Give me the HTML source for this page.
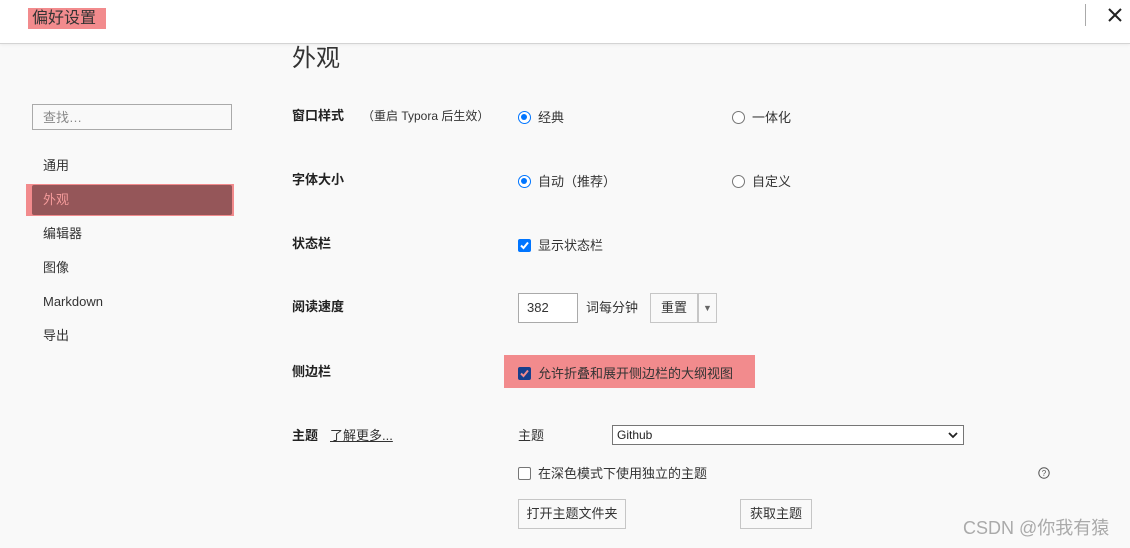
<!DOCTYPE html>
<html><head><meta charset="utf-8"><style>
*{margin:0;padding:0;box-sizing:border-box}
body{width:1130px;height:548px;overflow:hidden;background:#f9f9f9;font-family:"Liberation Sans","Noto Sans CJK SC",sans-serif;color:#333;font-size:13px;line-height:15px;position:relative}
.a{position:absolute;white-space:nowrap}
.hdr{position:absolute;left:0;top:0;width:1130px;height:44px;background:#fff;border-bottom:1px solid #d4d4d4;box-shadow:0 1px 3px rgba(0,0,0,.06)}
.b{font-weight:bold;color:#222}
.radio{position:absolute;width:13px;height:13px;border-radius:50%;border:1px solid #767676;background:#fff}
.radio.on{border:1.5px solid #0075ff}
.radio.on::after{content:"";position:absolute;left:2px;top:2px;width:6px;height:6px;border-radius:50%;background:#0075ff}
.cb{position:absolute;width:13px;height:13px;border-radius:2px;background:#0075ff}
.cb svg{position:absolute;left:0;top:0}
.btn{position:absolute;border:1px solid #c6c6c6;background:#f9f9f9;text-align:center}
</style></head><body>
<div class="hdr"></div>
<div class="a" style="left:28px;top:8px;width:78px;height:21px;background:#f28b8d"></div>
<div class="a" style="left:32px;top:10px;font-size:16px;line-height:18px;color:#333">偏好设置</div>
<div class="a" style="left:1085px;top:4px;width:1px;height:22px;background:#aaa"></div>
<svg class="a" style="left:1108px;top:8px" width="14" height="14"><path d="M1 1L13 13M13 1L1 13" stroke="#222" stroke-width="2"/></svg>

<div class="a" style="left:32px;top:104px;width:200px;height:26px;border:1px solid #aaa;background:#f9f9f9"></div>
<div class="a" style="left:43px;top:110px;color:#888">查找…</div>
<div class="a" style="left:43px;top:158px">通用</div>
<div class="a" style="left:26px;top:184px;width:208px;height:32px;background:#f28b8d"></div>
<div class="a" style="left:32px;top:185px;width:200px;height:30px;background:#955659;border-radius:2px"></div>
<div class="a" style="left:43px;top:192px;color:#f49a9a">外观</div>
<div class="a" style="left:43px;top:226px">编辑器</div>
<div class="a" style="left:43px;top:260px">图像</div>
<div class="a" style="left:43px;top:294px">Markdown</div>
<div class="a" style="left:43px;top:328px">导出</div>

<div class="a" style="left:292px;top:45px;font-size:24px;line-height:28px;color:#333">外观</div>

<div class="a b" style="left:292px;top:108px">窗口样式</div>
<div class="a" style="left:362px;top:109px;font-size:12px">（重启 Typora 后生效）</div>
<div class="radio on" style="left:518px;top:111px"></div>
<div class="a" style="left:538px;top:110px">经典</div>
<div class="radio" style="left:732px;top:111px"></div>
<div class="a" style="left:752px;top:110px">一体化</div>

<div class="a b" style="left:292px;top:172px">字体大小</div>
<div class="radio on" style="left:518px;top:175px"></div>
<div class="a" style="left:538px;top:174px">自动（推荐）</div>
<div class="radio" style="left:732px;top:175px"></div>
<div class="a" style="left:752px;top:174px">自定义</div>

<div class="a b" style="left:292px;top:236px">状态栏</div>
<div class="cb" style="left:518px;top:239px"><svg width="13" height="13"><path d="M3 6.5L5.5 9L10 3.5" stroke="#fff" stroke-width="2" fill="none"/></svg></div>
<div class="a" style="left:538px;top:238px">显示状态栏</div>

<div class="a b" style="left:292px;top:299px">阅读速度</div>
<div class="a" style="left:518px;top:293px;width:60px;height:30px;border:1px solid #aaa;background:#fff"></div>
<div class="a" style="left:527px;top:300px">382</div>
<div class="a" style="left:586px;top:300px">词每分钟</div>
<div class="btn" style="left:650px;top:293px;width:48px;height:30px;line-height:28px">重置</div>
<div class="btn" style="left:698px;top:293px;width:19px;height:30px;line-height:28px;font-size:9px;color:#666">▼</div>

<div class="a b" style="left:292px;top:364px">侧边栏</div>
<div class="a" style="left:504px;top:355px;width:251px;height:33px;background:#f28b8d"></div>
<div class="cb" style="left:518px;top:367px;background:#163f8c"><svg width="13" height="13"><path d="M3 6.5L5.5 9L10 3.5" stroke="#f28b8d" stroke-width="2" fill="none"/></svg></div>
<div class="a" style="left:538px;top:366px">允许折叠和展开侧边栏的大纲视图</div>

<div class="a b" style="left:292px;top:428px">主题</div>
<div class="a" style="left:330px;top:428px;text-decoration:underline">了解更多...</div>
<div class="a" style="left:518px;top:428px">主题</div>
<div class="a" style="left:612px;top:425px;width:352px;height:20px;border:1px solid #767676;background:#fff"></div>
<div class="a" style="left:617px;top:428px;font-size:12px;color:#222">Github</div>
<svg class="a" style="left:948px;top:431px" width="10" height="8"><path d="M1 2L5 6L9 2" stroke="#222" stroke-width="1.8" fill="none"/></svg>

<div class="a" style="left:518px;top:467px;width:13px;height:13px;border:1px solid #767676;border-radius:2px;background:#fff"></div>
<div class="a" style="left:538px;top:466px">在深色模式下使用独立的主题</div>
<svg class="a" style="left:1038px;top:467px" width="12" height="12"><circle cx="6" cy="6" r="5.2" stroke="#555" fill="none"/><text x="6" y="9" font-size="8" text-anchor="middle" fill="#555" font-family="Liberation Sans">?</text></svg>

<div class="btn" style="left:518px;top:499px;width:108px;height:30px;line-height:28px">打开主题文件夹</div>
<div class="btn" style="left:740px;top:499px;width:72px;height:30px;line-height:28px">获取主题</div>
<div class="a" style="left:963px;top:518px;font-size:18px;line-height:21px;color:#aaa">CSDN @你我有猿</div>
</body></html>
